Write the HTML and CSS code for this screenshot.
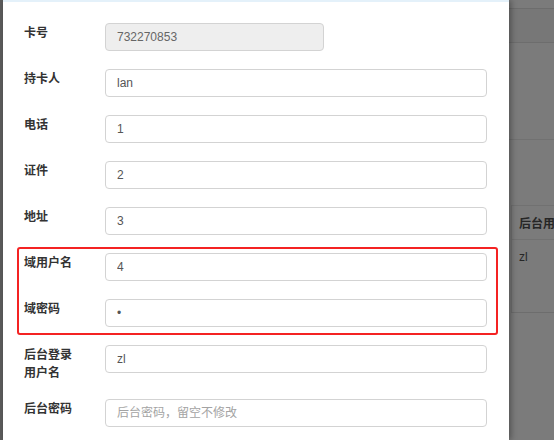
FILE: index.html
```html
<!DOCTYPE html>
<html lang="zh">
<head>
<meta charset="utf-8">
<title>编辑卡</title>
<link rel="stylesheet" href="styles.css">
</head>
<body>
<div class="edge"></div>
<div class="modal">
  <form class="form">
    <div class="row"><label class="lbl">卡号</label><input class="ctl ctl-short" type="text" value="732270853" readonly></div>
    <div class="row"><label class="lbl">持卡人</label><input class="ctl" type="text" value="lan"></div>
    <div class="row"><label class="lbl">电话</label><input class="ctl" type="text" value="1"></div>
    <div class="row"><label class="lbl">证件</label><input class="ctl" type="text" value="2"></div>
    <div class="row"><label class="lbl">地址</label><input class="ctl" type="text" value="3"></div>
    <div class="row"><label class="lbl">域用户名</label><input class="ctl" type="text" value="4"></div>
    <div class="row"><label class="lbl">域密码</label><input class="ctl" type="password" value="1"></div>
    <div class="row"><label class="lbl">后台登录用户名</label><input class="ctl" type="text" value="zl"></div>
    <div class="row"><label class="lbl">后台密码</label><input class="ctl" type="password" placeholder="后台密码，留空不修改"></div>
  </form>
  <div class="highlight"></div>
</div>
<div class="backdrop">
  <div class="bg-top"></div>
  <div class="bg-bar"></div>
  <div class="bg-panel"></div>
  <div class="bg-table">
    <div class="th">后台用户名</div>
    <div class="td">zl</div>
  </div>
</div>
</body>
</html>
```

FILE: styles.css
```css
html, body {
  margin: 0;
  padding: 0;
}
body {
  width: 554px;
  height: 440px;
  overflow: hidden;
  display: flex;
  background: #7b7b7b;
  font-family: "Noto Sans CJK SC", "Liberation Sans", sans-serif;
}
.edge {
  flex: none;
  width: 3px;
  background: #5c5c5c;
}
.modal {
  flex: none;
  position: relative;
  width: 506px;
  background: #fff;
  border-top: 2px solid #e4f1fa;
  box-shadow: 2px 0 6px rgba(0, 0, 0, 0.35);
  z-index: 2;
}
.form {
  margin: 0;
  padding: 21px 0 0 21px;
}
.row {
  display: flex;
  align-items: flex-start;
  margin-bottom: 18px;
}
.lbl {
  flex: none;
  width: 56px;
  margin-right: 25px;
  font-size: 12px;
  line-height: 18px;
  font-weight: bold;
  color: #333;
}
.ctl {
  box-sizing: border-box;
  width: 382px;
  height: 28px;
  margin: 0;
  padding: 0 11px;
  border: 1px solid #d3d3d3;
  border-radius: 4px;
  background: #fff;
  font-family: "Liberation Sans", "Noto Sans CJK SC", sans-serif;
  font-size: 12px;
  color: #555;
  outline: none;
}
.ctl::placeholder {
  color: #a3a3a3;
  font-family: "Noto Sans CJK SC", sans-serif;
}
.ctl-short {
  width: 219px;
  background: #eee;
  color: #666;
}
.highlight {
  position: absolute;
  left: 14px;
  top: 245px;
  width: 481px;
  height: 88px;
  box-sizing: border-box;
  border: 2px solid #f42323;
  border-radius: 3px;
}
.backdrop {
  flex: 1;
  overflow: hidden;
}
.bg-top {
  height: 8px;
  border-bottom: 1px solid #6d6d6d;
  background: #7b7b7b;
}
.bg-bar {
  height: 33px;
  border-bottom: 1px solid #6d6d6d;
  background: #777;
}
.bg-panel {
  height: 96px;
  border-bottom: 1px solid #717171;
}
.bg-table {
  margin-top: 65px;
  margin-left: 2px;
  border-top: 1px solid #717171;
  border-left: 1px solid #717171;
  border-bottom: 1px solid #6d6d6d;
  white-space: nowrap;
  font-size: 12px;
  color: #262626;
}
.th {
  height: 33px;
  line-height: 33px;
  padding-left: 7px;
  font-weight: bold;
  border-bottom: 1px solid #717171;
}
.td {
  height: 72px;
  padding: 8px 0 0 7px;
  box-sizing: border-box;
  line-height: 18px;
  font-family: "Liberation Sans", sans-serif;
}
```
